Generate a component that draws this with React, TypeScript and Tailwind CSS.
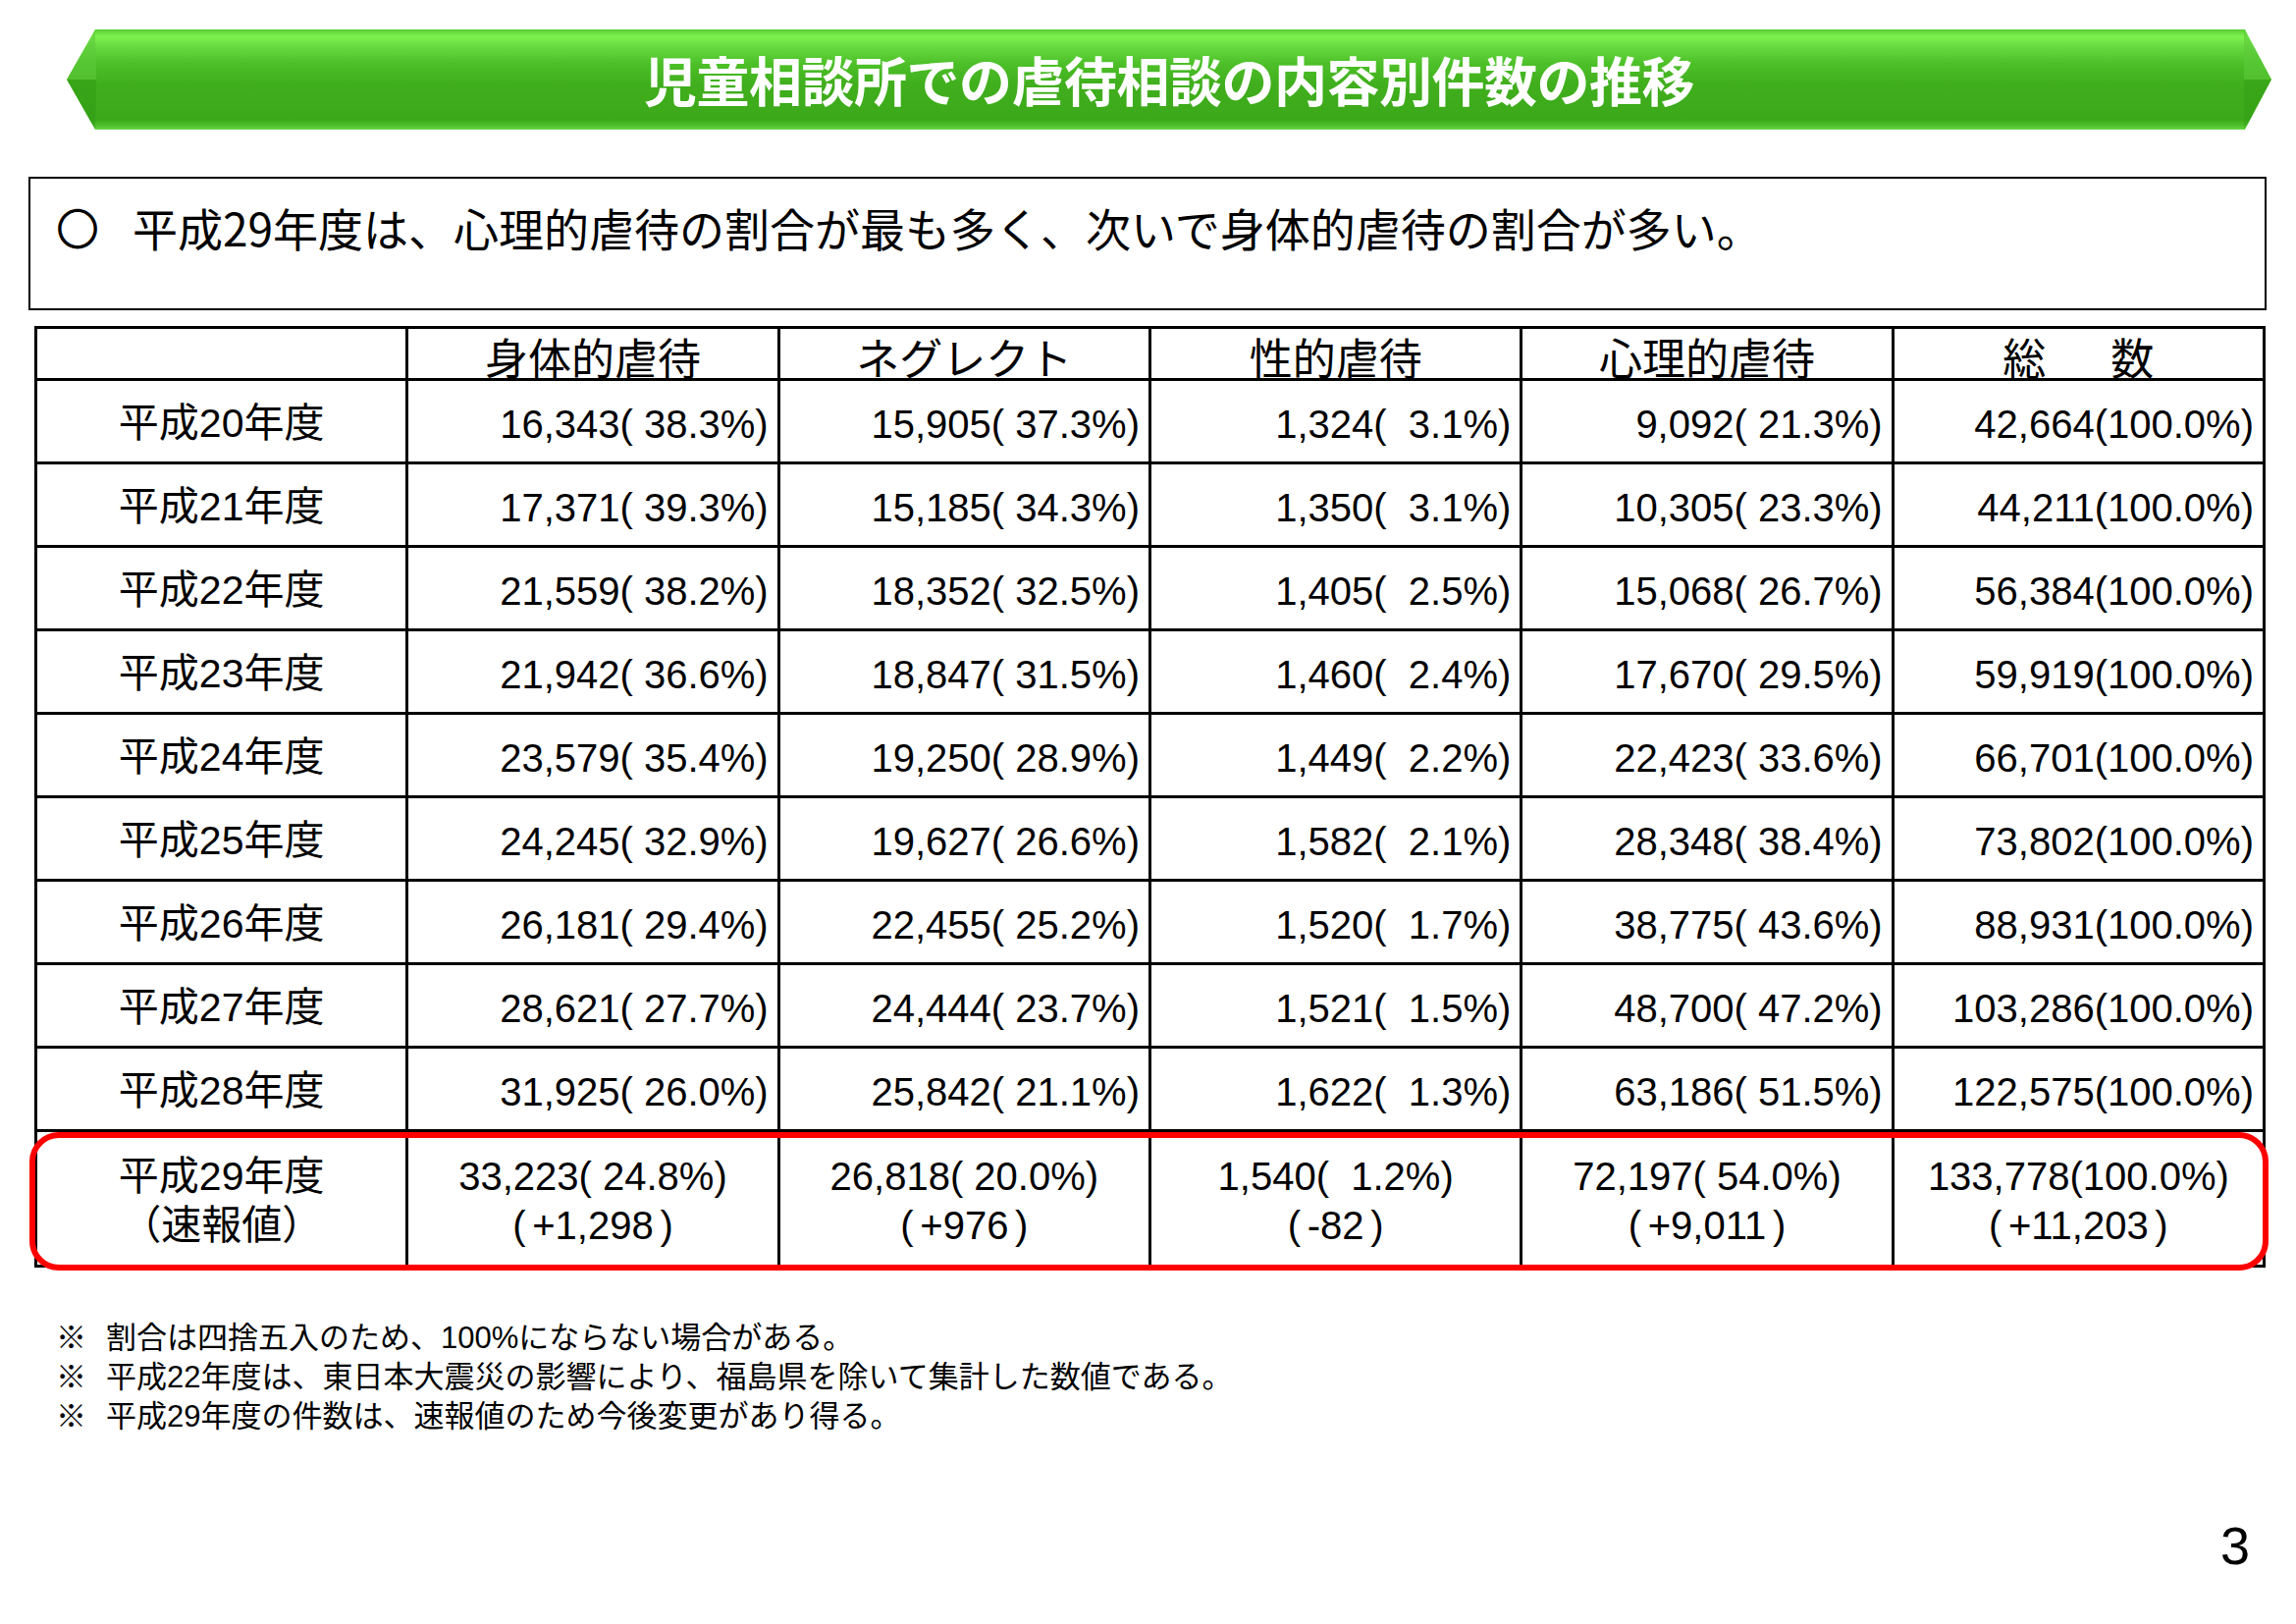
import React from 'react';

const jp = "font-['Noto_Sans_CJK_JP','Noto_Sans',sans-serif]";
// numbers use Arial metrics, CJK falls back to Noto
const mixFont = "font-['Liberation_Sans','Noto_Sans_CJK_JP',sans-serif]";

type Row = { label: string; values: string[] };

const rows: Row[] = [
  { label: '平成20年度', values: ['16,343( 38.3%)', '15,905( 37.3%)', '1,324(  3.1%)', '9,092( 21.3%)', '42,664(100.0%)'] },
  { label: '平成21年度', values: ['17,371( 39.3%)', '15,185( 34.3%)', '1,350(  3.1%)', '10,305( 23.3%)', '44,211(100.0%)'] },
  { label: '平成22年度', values: ['21,559( 38.2%)', '18,352( 32.5%)', '1,405(  2.5%)', '15,068( 26.7%)', '56,384(100.0%)'] },
  { label: '平成23年度', values: ['21,942( 36.6%)', '18,847( 31.5%)', '1,460(  2.4%)', '17,670( 29.5%)', '59,919(100.0%)'] },
  { label: '平成24年度', values: ['23,579( 35.4%)', '19,250( 28.9%)', '1,449(  2.2%)', '22,423( 33.6%)', '66,701(100.0%)'] },
  { label: '平成25年度', values: ['24,245( 32.9%)', '19,627( 26.6%)', '1,582(  2.1%)', '28,348( 38.4%)', '73,802(100.0%)'] },
  { label: '平成26年度', values: ['26,181( 29.4%)', '22,455( 25.2%)', '1,520(  1.7%)', '38,775( 43.6%)', '88,931(100.0%)'] },
  { label: '平成27年度', values: ['28,621( 27.7%)', '24,444( 23.7%)', '1,521(  1.5%)', '48,700( 47.2%)', '103,286(100.0%)'] },
  { label: '平成28年度', values: ['31,925( 26.0%)', '25,842( 21.1%)', '1,622(  1.3%)', '63,186( 51.5%)', '122,575(100.0%)'] },
];

const t = '\u2006';
const latest = [
  ['33,223( 24.8%)', `(${t}+1,298${t})`],
  ['26,818( 20.0%)', `(${t}+976${t})`],
  ['1,540(  1.2%)', `(${t}-82${t})`],
  ['72,197( 54.0%)', `(${t}+9,011${t})`],
  ['133,778(100.0%)', `(${t}+11,203${t})`],
];

const headers = ['身体的虐待', 'ネグレクト', '性的虐待', '心理的虐待'];

const notes = [
  '割合は四捨五入のため、100%にならない場合がある。',
  '平成22年度は、東日本大震災の影響により、福島県を除いて集計した数値である。',
  '平成29年度の件数は、速報値のため今後変更があり得る。',
];

const cell = 'border-r-[3px] border-b-[3px] border-black';

const App: React.FC = () => {
  return (
    <div className={`relative w-[2339px] h-[1654px] bg-white text-black ${jp}`}>
      {/* title banner */}
      <div className="pt-[30px] pl-[68px]">
        <div className="relative w-[2246px] h-[102px] [clip-path:polygon(29px_0,2219px_0,2246px_51px,2219px_102px,29px_102px,0_51px)] bg-[linear-gradient(to_bottom,#58cc34_0%,#7ef250_7%,#66d840_18%,#4cbf28_35%,#40ae1d_55%,#3ba919_90%,#4fbf2c_96%,#6ad846_100%)] flex items-center justify-center">
          <div className="absolute left-0 top-0 w-[30px] h-[51px] bg-[#5dc93a]/60 [clip-path:polygon(29px_0,30px_51px,0_51px)]" />
          <div className="absolute left-0 bottom-0 w-[30px] h-[51px] bg-[#2f9a14]/50 [clip-path:polygon(0_0,30px_0,29px_51px)]" />
          <div className="absolute right-0 top-0 w-[28px] h-[51px] bg-[#5dc93a]/60 [clip-path:polygon(0_0,28px_51px,0_51px)]" />
          <div className="absolute right-0 bottom-0 w-[28px] h-[51px] bg-[#2f9a14]/40 [clip-path:polygon(0_0,28px_0,0_51px)]" />
          <h1 className="relative text-white font-bold text-[54px] leading-none tracking-[-0.5px]">
            児童相談所での虐待相談の内容別件数の推移
          </h1>
        </div>
      </div>

      {/* summary box */}
      <div className="mt-[48px] ml-[29px] w-[2280px] h-[136px] border-2 border-black pt-[26px] pl-[26px]">
        <p className="text-[46px] leading-none flex items-center">
          <span className="mr-[34px] text-[44px]">〇</span>
          平成29年度は、心理的虐待の割合が最も多く、次いで身体的虐待の割合が多い。
        </p>
      </div>

      {/* table */}
      <div className="relative mt-[16px] ml-[35px] w-[2273px]">
        <div className="grid grid-cols-6 border-l-[3px] border-t-[3px] border-black">
          <div className={`${cell} h-[53px]`} />
          {headers.map(h => (
            <div key={h} className={`${cell} h-[53px] flex items-end justify-center text-[44px] leading-none`}>
              {h}
            </div>
          ))}
          <div className={`${cell} h-[53px] flex items-end justify-center text-[44px] leading-none`}>
            総<span className="inline-block w-[66px]" />数
          </div>

          {rows.map(r => (
            <React.Fragment key={r.label}>
              <div className={`${cell} ${mixFont} h-[85px] pt-[5px] flex items-center justify-center text-[41px] leading-none`}>
                {r.label}
              </div>
              {r.values.map((v, i) => (
                <div
                  key={i}
                  className={`${cell} ${mixFont} h-[85px] pt-[5px] flex items-center justify-end pr-[9px] text-[40px] leading-none whitespace-pre`}
                >
                  {v}
                </div>
              ))}
            </React.Fragment>
          ))}

          <div className={`${cell} ${mixFont} h-[138px] pt-[4px] flex flex-col items-center justify-center text-[41px] leading-[50px]`}>
            <span>平成29年度</span>
            <span>（速報値）</span>
          </div>
          {latest.map((v, i) => (
            <div
              key={i}
              className={`${cell} ${mixFont} h-[138px] pt-[4px] flex flex-col items-center justify-center text-[40px] leading-[50px] whitespace-pre`}
            >
              <span>{v[0]}</span>
              <span>{v[1]}</span>
            </div>
          ))}
        </div>
        {/* highlight of the latest year */}
        <div className="absolute left-[-5px] bottom-[-3px] w-[2281px] h-[141px] border-[6px] border-[#ff0000] rounded-[30px] pointer-events-none" />
      </div>

      {/* notes */}
      <div className={`mt-[52px] ml-[57px] text-[31px] leading-[40px] ${mixFont}`}>
        {notes.map(n => (
          <p key={n}>
            <span className="mr-[20px]">※</span>
            {n}
          </p>
        ))}
      </div>

      <div className="mt-[84px] pr-[47px] text-right font-['Liberation_Sans',sans-serif] text-[54px] leading-none">
        3
      </div>
    </div>
  );
};

export default App;
